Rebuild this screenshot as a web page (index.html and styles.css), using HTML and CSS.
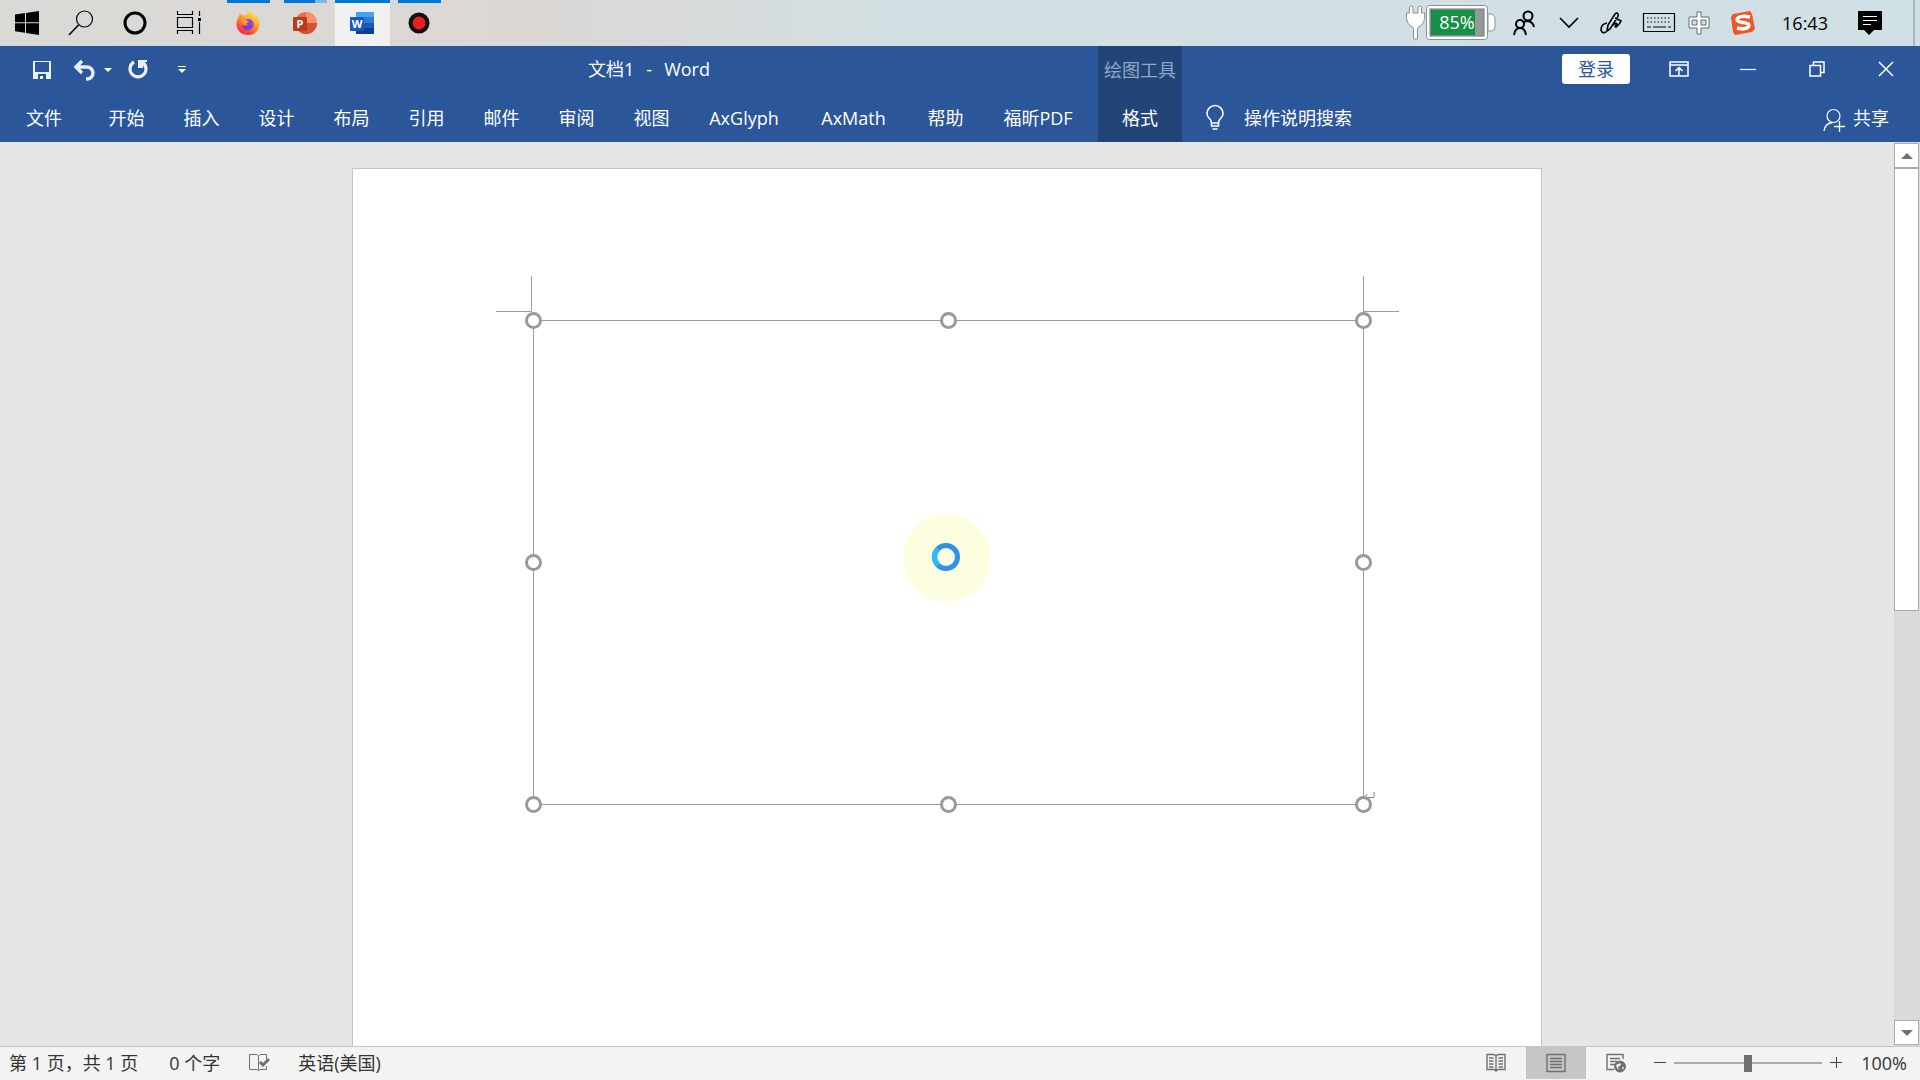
FILE: index.html
```html
<!DOCTYPE html>
<html lang="zh-CN">
<head>
<meta charset="utf-8">
<title>文档1 - Word</title>
<link rel="stylesheet" href="styles.css">
</head>
<body>
<div class="desktop">
  <header class="taskbar">
    <nav class="task-group" aria-label="任务栏">
      <button class="task-system" aria-label="开始菜单"><svg width="26" height="26"><path d="M1 4.500 11 3v9.300H1zM12 2.900 25 1v11.300H12zM1 13.300h10v9.400L1 21.200zM12 13.300h13V25l-13-1.900z"/></svg></button>
      <button class="task-system" aria-label="搜索"><svg width="26" height="26" class="line"><circle cx="16.500" cy="9" r="8"/><path d="M10.500 15 1 25" stroke-width="1.600"/></svg></button>
      <button class="task-system" aria-label="助手"><svg width="26" height="26" class="line"><circle cx="13" cy="13" r="10" stroke-width="3"/></svg></button>
      <button class="task-system" aria-label="任务视图"><svg width="26" height="26" class="line"><path d="M1.500 1v3.500h15V1M1.500 7.500h15v10h-15zM1.500 24v-3.500h15V24M23.500 1v5M23.500 12v12"/><path d="M22 8h3v3h-3z" fill="#000" stroke="none"/></svg></button>
      <div class="task-apps">
        <button class="task-app running" aria-label="Firefox"><svg width="26" height="26"><defs><linearGradient id="fox" x1=".8" y1="0" x2=".2" y2="1"><stop offset="0" stop-color="#fff04a"/><stop offset=".4" stop-color="#ffa52a"/><stop offset=".75" stop-color="#ff4a38"/><stop offset="1" stop-color="#e62170"/></linearGradient><linearGradient id="globe" x1="1" y1="0" x2="0" y2="1"><stop offset="0" stop-color="#a743ee"/><stop offset="1" stop-color="#4f43c8"/></linearGradient></defs><path d="M15 1c3 2 4 4 4.500 6 1 0 1.500-1 1.500-2 2.500 3 3.700 6 3.500 9.500C24 21 19.500 25 13 25S1.500 20.500 1.500 14c0-3 1-5.500 2.500-7.500L4.500 3l3 2.500C9 5 10 5 11 5.500 11.500 4 13 2 15 1z" fill="url(#fox)"/><path d="M8 10.500c3-1.500 7-3 10 1 2 4-.5 8.500-5 8.500-3.500 0-5.500-2.500-5.500-5 2 1.500 4 .8 5.500-.5-1-1.500-3-1-4-2.500z" fill="url(#globe)"/><path d="m6 9 5 .500 3 2.500-4 2-4-2z" fill="#ff9640"/></svg></button>
        <button class="task-app grouped" aria-label="PowerPoint"><svg width="26" height="26"><circle cx="14" cy="13" r="11" fill="#ed6c47"/><path d="M14 2a11 11 0 0 1 11 11H14z" fill="#ff8f6b"/><path d="M25 13a11 11 0 0 1-22 0z" fill="#d35230"/><rect x="1" y="7" width="14" height="14" rx="1" fill="#b83b1d"/><text x="8" y="18" class="app-letter">P</text></svg></button>
        <button class="task-app current" aria-label="Word"><svg width="26" height="26"><path d="M7 2h18v6H7z" fill="#41a5ee"/><path d="M7 7h18v6H7z" fill="#2b7cd3"/><path d="M7 13h18v5H7z" fill="#185abd"/><path d="M7 18h18v6H7z" fill="#103f91"/><rect x="1" y="7" width="14" height="14" rx="1" fill="#185abd"/><text x="8" y="18" class="app-letter">W</text></svg></button>
        <button class="task-app running" aria-label="录屏"><svg width="26" height="26"><circle cx="13" cy="13" r="10.500" fill="#111"/><circle cx="13" cy="13" r="6.500" fill="#e8201c"/></svg></button>
      </div>
    </nav>
    <div class="tray">
      <button class="power" aria-label="电池 85%"><svg width="90" height="36"><g fill="#fff" stroke="#8b8f91"><path d="M4.500 2q2-2 3.500 0v6h5V2q2-2 3.500 0v6h3q1 9-4 13-3 1-3 3v10h-4V24q0-2-3-3-5-4-4-13h3z"/><path d="M83 9h4q3 1 3 5v8q0 3-3 4h-4z"/><rect x="21.500" y=".5" width="61" height="34" rx="3"/></g><rect x="25" y="4" width="54" height="27" fill="#929a9b" stroke="#6e7777"/><path d="M26 5h44v25H26z" fill="#159147"/><text x="52" y="24" class="charge">85%</text></svg></button>
      <button class="people" aria-label="人脉"><svg width="24" height="26" class="line bold"><circle cx="16" cy="6" r="4.500"/><path d="M11 13q2-2 5-2 5 1 6 6"/><circle cx="8" cy="14" r="4"/><path d="M2 25q1-7 6-7t6 7"/></svg></button>
      <button class="chevron" aria-label="显示隐藏的图标"><svg width="20" height="12" class="line"><path d="m1 1 9 9 9-9" stroke-width="1.600"/></svg></button>
      <button class="pen" aria-label="Windows Ink"><svg width="24" height="24" class="line"><path d="M8 20l1-6L16 3q2-2 3 0t-1 4L11 18zM8 12q-6 1-6 7 1 4 5 2M13 15q4-4 5-2-3 3-1 3 4-3 5-6l-6-3" stroke-width="1.600"/></svg></button>
      <button class="keyboard" aria-label="触摸键盘"><svg width="34" height="22" class="line"><path d="M1.500 1.500h31v18h-31z"/><path d="M5 6h24M5 10h24" stroke-dasharray="1.500 2"/><path d="M5 15h4M11 15h13M26 15h3"/></svg></button>
      <button class="ime" aria-label="中文输入"><svg width="22" height="24"><path d="M9 1h4v5h8v11h-8v6H9v-6H1V6h8zM4 9v5h5V9zM13 9v5h5V9z" fill="#fff" fill-rule="evenodd" stroke="#606a6d"/></svg></button>
      <button class="sogou" aria-label="搜狗输入法"><svg width="26" height="26"><path d="m3 4 17-3 2 3 3 15-3 3-17 3-2-3L1 7z" fill="#ee5624"/><path d="M20 7c-7-2-13 0-13 3s12 2 12 5-5 5-12 3" fill="none" stroke="#fff" stroke-width="3.500"/></svg></button>
      <time class="clock">16:43</time>
      <button class="notices" aria-label="通知"><svg width="24" height="24"><path d="M0 0h24v19h-8l-5 5-5-5H0z"/><path d="M5 5.500h14M5 9.500h14M5 13.500h8" stroke="#fff"/></svg></button>
      <span class="show-desktop"></span>
    </div>
  </header>

  <div class="ribbon">
    <div class="title-left">
      <div class="quick-access">
        <button class="save" aria-label="保存"><svg width="20" height="20"><path d="M1 1h18v18H1zM3 2v10h14V2zM6 14v5h2v-3h3v3h3v-5z" fill="#eaf1ff" fill-rule="evenodd"/></svg></button>
        <button class="undo" aria-label="撤消"><svg width="24" height="22"><path d="M3 8h11a6 6 0 0 1 0 12h-1M9 2 3 8l6 6" fill="none" stroke="#eaf1ff" stroke-width="3.400"/></svg><svg width="8" height="5"><path d="M0 0h8L4 4z" fill="#fff"/></svg></button>
        <button class="redo" aria-label="重复"><svg width="22" height="22"><path d="M7 3a8 8 0 1 0 8 0" fill="none" stroke="#eaf1ff" stroke-width="3.200"/><path d="M11 1h9v2h-3l-1 6h-5z" fill="#eaf1ff"/></svg></button>
        <button class="customize" aria-label="自定义快速访问工具栏"><svg width="8" height="8"><path d="M0 .5h8" stroke="#fff"/><path d="M0 3h8L4 7z" fill="#fff"/></svg></button>
      </div>
      <h1 class="doc-title"><span>文档1</span><span>-</span><span>Word</span></h1>
    </div>
    <div class="context-group">
      <span class="context-title">绘图工具</span>
      <button class="tab-context">格式</button>
    </div>
    <div class="title-right">
      <button class="sign-in">登录</button>
      <button class="window-button" aria-label="功能区显示选项"><svg width="20" height="16" class="white"><path d="M1 1h18v14H1zM1 4h18M10 14V7M6.500 10 10 6.500l3.500 3.500" stroke-width="1.500"/></svg></button>
      <button class="window-button" aria-label="最小化"><svg width="16" height="16" class="white"><path d="M0 8.500h16"/></svg></button>
      <button class="window-button" aria-label="还原"><svg width="16" height="16" class="white"><path d="M1 4.500h10.500V15H1zM4.500 4V1H15v10.500h-3" stroke-width="1.500"/></svg></button>
      <button class="window-button" aria-label="关闭"><svg width="16" height="16" class="white"><path d="m1 1 14 14M15 1 1 15" stroke-width="1.500"/></svg></button>
    </div>
    <nav class="tabs" aria-label="功能区">
      <button class="tab file">文件</button>
      <button class="tab">开始</button>
      <button class="tab">插入</button>
      <button class="tab">设计</button>
      <button class="tab">布局</button>
      <button class="tab">引用</button>
      <button class="tab">邮件</button>
      <button class="tab">审阅</button>
      <button class="tab">视图</button>
      <button class="tab wide">AxGlyph</button>
      <button class="tab medium">AxMath</button>
      <button class="tab">帮助</button>
      <button class="tab wide">福昕PDF</button>
    </nav>
    <div class="tell-row">
      <button class="tell-me"><svg width="20" height="26" class="white"><path d="M6.500 18q0-3-2.500-5-2-2-2-4.500a8 8 0 0 1 16 0q0 2.500-2 4.500-2.500 2-2.500 5zM6.500 18v3h7v-3M7.500 24h5" stroke-width="1.600"/></svg>操作说明搜索</button>
      <button class="share"><svg width="22" height="20" class="white"><circle cx="10.500" cy="8" r="6.500"/><path d="M1 23q1-8 9-8.500M11 18.500h11M16.500 13v11" stroke-width="1.300"/></svg>共享</button>
    </div>
  </div>

  <main class="workspace">
    <div class="canvas">
      <article class="page">
        <svg class="drawing" width="1188" height="660" viewBox="0 0 1188 660">
          <g fill="none" stroke="#9c9c9c">
            <path d="M178.500 107v35.500H143M1010.500 107v35.500H1046"/>
            <path d="M180.500 151.500h830v484h-830z"/>
            <path d="M1021 623v5.500h-10l3.500-3.500m-3.500 3.500 3.500 3.500" stroke="#888"/>
          </g>
          <g fill="#fff" stroke="#999" stroke-width="3">
            <circle cx="180.500" cy="151.500" r="7"/><circle cx="595.500" cy="151.500" r="7"/><circle cx="1010.500" cy="151.500" r="7"/>
            <circle cx="180.500" cy="393.500" r="7"/><circle cx="1010.500" cy="393.500" r="7"/>
            <circle cx="180.500" cy="635.500" r="7"/><circle cx="595.500" cy="635.500" r="7"/><circle cx="1010.500" cy="635.500" r="7"/>
          </g>
          <circle cx="594" cy="389" r="44" fill="#fdfedf"/>
          <circle cx="593" cy="388" r="11.500" fill="#fdfedf" stroke="#2e91ea" stroke-width="5"/>
          <path d="M585 396a11.500 11.500 0 0 1 0-16" fill="none" stroke="#29bdf5" stroke-width="5"/>
        </svg>
      </article>
    </div>
    <div class="scrollbar">
      <button class="scroll-button" aria-label="向上滚动"><svg width="12" height="6"><path d="M0 6h12L6 0z"/></svg></button>
      <div class="scroll-track"><div class="scroll-thumb"></div></div>
      <button class="scroll-button" aria-label="向下滚动"><svg width="12" height="6"><path d="M0 0h12L6 6z"/></svg></button>
    </div>
  </main>

  <footer class="status">
    <div class="status-info">
      <span class="page-count">第 1 页，共 1 页</span>
      <span>0 个字</span>
      <button class="proof" aria-label="校对"><svg width="22" height="20" class="gray"><path d="M10.500 3 9 1.500H1.500v15H9l1.500 1.500 1.500-1.500h6.500V13M10.500 3v15M10.500 3 12 1.500h6.500V6"/><path d="m12 9 3 3 6-6" stroke-width="3"/></svg></button>
      <span>英语(美国)</span>
    </div>
    <div class="status-tools">
      <button class="view" aria-label="阅读视图"><svg width="20" height="20" class="gray"><path d="M10 3 8 1.500H1v15h7l2 1.500 2-1.500h7v-15h-7zM10 3v15M3 5h4.500M3 8h4.500M3 11h4.500M3 14h4.500M12.500 5H17M12.500 8H17M12.500 11H17M12.500 14H17" stroke-width="1.400"/></svg></button>
      <button class="view active" aria-label="页面视图"><svg width="20" height="20" class="gray"><path d="M1 1.500h18v17H1zM4 5.500h12M4 8.500h12M4 11.500h12M4 14.500h12" stroke-width="1.400"/></svg></button>
      <button class="view" aria-label="Web 版式视图"><svg width="20" height="20" class="gray"><path d="M17 6V1.500H1v15h7M4 5.500h10M4 8.500h7M4 11.500h5" stroke-width="1.400"/><circle cx="14" cy="13.500" r="5.500" fill="#707070"/><path d="m10 12 4-2 1 2-3 2 1 3-2-2zM16 14l2 0-1 3z" fill="#f3f3f3" stroke="none"/></svg></button>
      <button class="zoom-step out" aria-label="缩小"><svg width="12" height="12" class="step"><path d="M0 5.500h12"/></svg></button>
      <input class="zoom-range" type="range" min="0" max="200" value="100" aria-label="显示比例">
      <button class="zoom-step" aria-label="放大"><svg width="12" height="12" class="step"><path d="M0 5.500h12M6.500 0v11"/></svg></button>
      <button class="zoom-value">100%</button>
    </div>
  </footer>
</div>
</body>
</html>
```
FILE: styles.css
```css
* { box-sizing: border-box; }
body {
  margin: 0;
  font: 18px/24px "Open Sans", "Noto Sans CJK SC", sans-serif;
}
button {
  display: flex;
  align-items: center;
  justify-content: center;
  flex: none;
  margin: 0;
  padding: 0;
  border: 0;
  background: none;
  color: inherit;
  font: inherit;
  white-space: nowrap;
}
svg { display: block; flex: none; overflow: visible; }
.line { fill: none; stroke: #000; stroke-width: 1.200; }
.bold { stroke-width: 2; }
.white { fill: none; stroke: #fff; stroke-width: 1.200; }
.gray { fill: none; stroke: #707070; }
.step { fill: none; stroke: #444; }

.desktop {
  display: grid;
  grid-template-rows: 46px 96px minmax(0, 1fr) 34px;
  height: 100vh;
  overflow: hidden;
}

/* Taskbar */
.taskbar {
  display: flex;
  justify-content: space-between;
  background: linear-gradient(90deg, #dbd9d6, #dad7d4 28%, #d2dfe3 48%, #d3dfe4 70%, #cfe0e5);
}
.task-group, .task-apps, .tray { display: flex; }
.task-system { width: 54px; }
.task-apps { margin-left: 4px; }
.task-app {
  width: 57px;
  padding-right: 2px;
  background: linear-gradient(#0078d7, #0078d7) center top / 43px 3px no-repeat;
}
.grouped {
  background:
    linear-gradient(90deg, #0078d7 31px, #76b9ea 31px) center top / 43px 3px no-repeat;
}
.current {
  width: 55px;
  margin: 0 1px;
  background: linear-gradient(#0078d7, #0078d7) center top / 55px 3px no-repeat #f1f1f1;
}
.app-letter {
  fill: #fff;
  font: bold 11px "Open Sans", sans-serif;
  text-anchor: middle;
}
.charge {
  fill: #fff;
  font: 18px "Open Sans", sans-serif;
  text-anchor: middle;
}
.power { width: 96px; padding-left: 2px; }
.people { width: 54px; }
.chevron { width: 36px; }
.pen { width: 48px; }
.keyboard { width: 48px; }
.ime { width: 32px; }
.sogou { width: 56px; }
.clock { width: 68px; text-align: center; line-height: 46px; }
.notices { width: 74px; padding-right: 12px; }
.show-desktop { width: 7px; border-left: 2px solid #a9b8bc; }

/* Ribbon */
.ribbon {
  display: grid;
  grid-template-columns: 1098px 84px minmax(0, 1fr);
  grid-template-rows: 48px 48px;
  background: #2b579a;
  color: #fff;
}
.title-left, .title-right, .tabs, .tell-row { display: flex; align-items: center; }
.title-left, .title-right { padding-bottom: 2px; }
.quick-access { display: flex; align-items: center; width: 200px; padding: 2px 0 0 32px; }
.undo { gap: 7px; margin-left: 21px; }
.redo { margin-left: 15px; }
.customize { margin-left: 29px; }
.doc-title {
  display: flex;
  flex: 1;
  justify-content: center;
  gap: 12px;
  margin: 0;
  font-size: 18px;
  font-weight: 400;
}
.context-group {
  display: grid;
  grid-row: span 2;
  grid-template-rows: 1fr 1fr;
  place-items: center;
  background: #224578;
}
.context-title { color: #91a6c6; }
.title-right { justify-content: flex-end; }
.sign-in {
  width: 68px;
  height: 30px;
  margin-right: 14px;
  border-radius: 3px;
  background: #fff;
  color: #2b579a;
}
.window-button { width: 69px; height: 46px; }
.tab { width: 75px; height: 48px; }
.file { width: 89px; padding-right: 1px; }
.wide { width: 110px; }
.medium { width: 109px; }
.tell-row { justify-content: space-between; padding: 0 31px 0 23px; }
.tell-me { gap: 19px; }
.share { gap: 8px; }

/* Document area */
.workspace {
  display: grid;
  grid-template-columns: minmax(0, 1fr) 26px;
  min-height: 0;
  background: #e6e6e6;
}
.canvas {
  display: flex;
  justify-content: center;
  padding-top: 26px;
  overflow: hidden;
}
.page {
  width: 1190px;
  border: 1px solid #c6c6c6;
  border-bottom: 0;
  background: #fff;
}
.scrollbar {
  display: flex;
  flex-direction: column;
  padding: 1px 1px 1px 0;
  background: #dadada;
}
.scroll-button {
  height: 25px;
  border: 1px solid #ababab;
  background: #fff;
  fill: #707070;
}
.scroll-track { flex: 1; }
.scroll-thumb { height: 52%; border: 1px solid #ababab; background: #fff; }

/* Status bar */
.status {
  display: flex;
  align-items: stretch;
  justify-content: space-between;
  padding-bottom: 1px;
  border-top: 1px solid #c6c6c6;
  background: #f3f3f3;
  color: #333;
}
.status-info, .status-tools { display: flex; align-items: center; }
.status-info { gap: 28px; padding-left: 9px; }
.page-count { margin-right: 3px; }
.status-tools { padding-right: 13px; }
.view { width: 60px; height: 32px; }
.active { background: #c6c6c6; }
.zoom-step { width: 12px; height: 32px; }
.out { margin-left: 8px; }
.zoom-range {
  width: 148px;
  height: 18px;
  margin: 0 8px;
  appearance: none;
  background: linear-gradient(#ababab, #ababab) center / 100% 2px no-repeat;
}
.zoom-range::-webkit-slider-thumb {
  width: 8px;
  height: 17px;
  appearance: none;
  background: #707070;
}
.zoom-value { margin-left: 19px; }
```
